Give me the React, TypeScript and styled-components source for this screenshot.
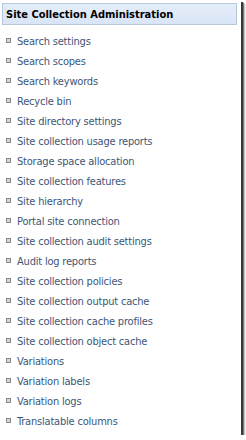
import styled, { createGlobalStyle } from 'styled-components'

const items = [
  'Search settings',
  'Search scopes',
  'Search keywords',
  'Recycle bin',
  'Site directory settings',
  'Site collection usage reports',
  'Storage space allocation',
  'Site collection features',
  'Site hierarchy',
  'Portal site connection',
  'Site collection audit settings',
  'Audit log reports',
  'Site collection policies',
  'Site collection output cache',
  'Site collection cache profiles',
  'Site collection object cache',
  'Variations',
  'Variation labels',
  'Variation logs',
  'Translatable columns',
]

const GlobalStyle = createGlobalStyle`
  html, body {
    margin: 0;
    padding: 0;
    background: #ffffff;
  }
  body {
    font-family: "DejaVu Sans", Verdana, sans-serif;
  }
`

const Panel = styled.div`
  width: 241px;
  height: 435px;
  box-sizing: border-box;
  background: #fff;
  padding: 3px 4px 0 2px;
  box-shadow: 2px 2px 0 #3a3a3a, 3px 3px 1px #777, 4px 4px 2px #c8c8c8;
`

const Header = styled.div`
  height: 22px;
  box-sizing: border-box;
  border: 1px solid #b8c8dc;
  background: linear-gradient(#e4edf9, #d9e5f6);
  display: flex;
  align-items: center;
  padding-left: 3px;
  font-family: "DejaVu Sans Condensed", "DejaVu Sans", sans-serif;
  font-stretch: condensed;
  font-weight: bold;
  font-size: 11px;
  color: #000;
`

const List = styled.ul`
  list-style: none;
  margin: 6px 0 0;
  padding: 0;
`

const Item = styled.li`
  height: 20px;
  display: flex;
  align-items: center;
  gap: 6px;
  padding-left: 4px;
  font-family: "DejaVu Sans Condensed", "DejaVu Sans", sans-serif;
  font-stretch: condensed;
  font-size: 11px;
  letter-spacing: -0.2px;
  color: #3d5677;
`

const Bullet = styled.span`
  width: 5px;
  height: 5px;
  box-sizing: border-box;
  border: 1px solid #8a8a8a;
  background: #d4d4d4;
  flex: none;
  margin-bottom: 1px;
`

export default function App() {
  return (
    <>
      <GlobalStyle />
      <Panel>
        <Header>Site Collection Administration</Header>
        <List>
          {items.map((label) => (
            <Item key={label}>
              <Bullet />
              {label}
            </Item>
          ))}
        </List>
      </Panel>
    </>
  )
}
